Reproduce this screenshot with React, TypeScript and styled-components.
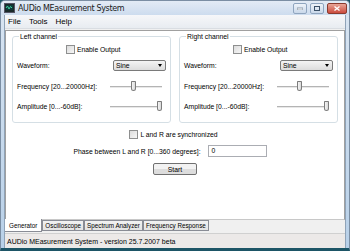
import * as React from "react";
import styled, { createGlobalStyle } from "styled-components";

const font = `"Liberation Sans", "DejaVu Sans", sans-serif`;

const Global = createGlobalStyle`
  html, body { margin: 0; padding: 0; background: #1d5566; }
  body { font-family: ${font}; font-size: 6.8px; color: #000; }
`;

const Frame = styled.div`
  width: 350px;
  height: 251px;
  box-sizing: border-box;
  display: flex;
  flex-direction: column;
  background: linear-gradient(#d9e5f2, #b8d0e8);
  border: 1px solid #7b8ea3;
  border-bottom: 3px solid #1d5566;
  border-radius: 5px 5px 0 0;
  overflow: hidden;
`;

const TitleBar = styled.div`
  height: 14px;
  display: flex;
  align-items: center;
  padding: 0 2px 0 3px;
  gap: 3px;
  background: linear-gradient(#e3ebf5, #cddcee);
`;

const Title = styled.span`
  flex: 1;
  font-size: 8px;
  color: #1a1a1a;
  font-family: "DejaVu Sans", sans-serif;
  letter-spacing: -0.35px;
`;

const WinButton = styled.div<{ close?: boolean; w: number }>`
  width: ${(p) => p.w}px;
  height: 9px;
  border: 1px solid ${(p) => (p.close ? "#8a3a2e" : "#8fa5bf")};
  border-radius: 2px;
  background: ${(p) =>
    p.close
      ? "linear-gradient(#e9a597, #cb4b3e)"
      : "linear-gradient(#eef3f9, #c9d8ea)"};
  display: flex;
  align-items: center;
  justify-content: center;
`;

const Client = styled.div`
  flex: 1;
  margin: 0 3px;
  display: flex;
  flex-direction: column;
  background: #f0f0f0;
  border-left: 1px solid #8fa3b8;
  border-right: 1px solid #8fa3b8;
`;

const MenuBar = styled.div`
  height: 13px;
  display: flex;
  align-items: center;
  gap: 8px;
  padding-left: 3px;
  font-size: 8px;
  background: linear-gradient(#f6f7f9, #e8ecf1);
  border-bottom: 1px solid #d9dde2;
`;

const Page = styled.div`
  flex: 1;
  margin-top: 1px;
  background: #fff;
  border: 1px solid #a0a0a0;
  border-bottom-color: #c8c8c8;
  display: flex;
  flex-direction: column;
  padding: 2px 6px 0 6px;
`;

const Channels = styled.div`
  display: flex;
  justify-content: space-between;
`;

const Group = styled.fieldset`
  flex: 0 0 159px;
  min-width: 0;
  margin: 0;
  padding: 0 4px 0 4px;
  border: 1px solid #d5dfe5;
  border-radius: 3px;
  display: flex;
  flex-direction: column;
  height: 90px;
  box-sizing: border-box;
`;

const Legend = styled.legend`
  padding: 0 1px;
  margin-left: 2px;
`;

const CheckRow = styled.label<{ indent?: number }>`
  display: flex;
  align-items: center;
  gap: 2px;
  height: 10px;
  margin-top: 4px;
  margin-left: ${(p) => p.indent ?? 0}px;
`;

const Box = styled.span`
  width: 7px;
  height: 7px;
  border: 1px solid #8e8f8f;
  background: linear-gradient(135deg, #dcdcdc, #f6f6f6);
`;

const Row = styled.div<{ h: number }>`
  display: flex;
  align-items: center;
  height: ${(p) => p.h}px;
`;

const Label = styled.span`
  width: 96px;
  flex: none;
`;

const Select = styled.div`
  width: 53px;
  height: 11px;
  box-sizing: border-box;
  border: 1px solid #7a7a7a;
  border-radius: 2px;
  background: linear-gradient(#f4f4f4, #dcdcdc);
  display: flex;
  align-items: center;
  justify-content: space-between;
  padding: 0 3px 0 2px;
`;

const Arrow = styled.span`
  width: 0;
  height: 0;
  border-left: 2.5px solid transparent;
  border-right: 2.5px solid transparent;
  border-top: 3px solid #000;
`;

const Track = styled.div`
  position: relative;
  margin-left: -3px;
  width: 52px;
  height: 1px;
  background: #b4b4b4;
  border-bottom: 1px solid #e8e8e8;
`;

const Thumb = styled.span`
  position: absolute;
  top: -5px;
  width: 5px;
  height: 10px;
  box-sizing: border-box;
  border: 1px solid #7c7c7c;
  border-radius: 1px 1px 3px 3px;
  background: linear-gradient(90deg, #f4f4f4, #dadada);
`;

const Center = styled.div`
  display: flex;
  flex-direction: column;
  align-items: center;
  gap: 6px;
  margin-top: 2px;
`;

const PhaseRow = styled.div`
  display: flex;
  align-items: center;
  gap: 7px;
  margin-right: 10px;
`;

const Input = styled.div`
  width: 59px;
  height: 12px;
  box-sizing: border-box;
  border: 1px solid #abadb3;
  padding: 1px 3px;
  background: #fff;
`;

const Button = styled.div`
  width: 44px;
  height: 12px;
  box-sizing: border-box;
  border: 1px solid #707070;
  border-radius: 2px;
  background: linear-gradient(#f2f2f2 50%, #dddddd 50%);
  display: flex;
  align-items: center;
  justify-content: center;
`;

const Tabs = styled.div`
  display: flex;
  height: 13px;
  background: #f0f0f0;
`;

const Tab = styled.div<{ active?: boolean }>`
  padding: 0 ${(p) => (p.active ? 4 : 2)}px;
  height: ${(p) => (p.active ? 13 : 11)}px;
  margin-top: ${(p) => (p.active ? -1 : 0)}px;
  box-sizing: border-box;
  display: flex;
  align-items: center;
  background: ${(p) => (p.active ? "#fff" : "linear-gradient(#f2f2f2, #e3e3e3)")};
  border: 1px solid #898c95;
  border-top: ${(p) => (p.active ? "none" : "1px solid #898c95")};
  border-left: ${(p) => (p.active ? "none" : "1px solid #898c95")};
  font-size: 6.3px;
`;

const Status = styled.div`
  height: 14px;
  display: flex;
  align-items: center;
  padding-left: 2px;
  font-size: 7px;
  background: #ece9e8;
  border-top: 1px solid #d0d0d0;
`;

const Channel: React.FC<{ name: string; freq: number }> = ({ name, freq }) => (
  <Group>
    <Legend>{name}</Legend>
    <CheckRow indent={49}>
      <Box />
      Enable Output
    </CheckRow>
    <Row h={23}>
      <Label>Waveform:</Label>
      <Select>
        Sine
        <Arrow />
      </Select>
    </Row>
    <Row h={19}>
      <Label>Frequency [20...20000Hz]:</Label>
      <Track>
        <Thumb style={{ left: freq }} />
      </Track>
    </Row>
    <Row h={21}>
      <Label>Amplitude [0...-60dB]:</Label>
      <Track>
        <Thumb style={{ left: 47 }} />
      </Track>
    </Row>
  </Group>
);

export default function App() {
  return (
    <>
      <Global />
      <Frame>
        <TitleBar>
          <svg width="11" height="10" viewBox="0 0 11 10">
            <rect x="0.5" y="0.5" width="10" height="9" fill="#1a2a2a" stroke="#556" />
            <rect x="2" y="2" width="7" height="5" fill="#0e3b3b" />
            <path d="M2 5 L3.5 3 L5 6 L6.5 3.5 L8 5" stroke="#3fd0a0" fill="none" />
          </svg>
          <Title>AUDio MEasurement System</Title>
          <WinButton w={12}>
            <svg width="6" height="3"><rect y="1" width="6" height="2" fill="#fff" stroke="#3b5068" strokeWidth="0.5" /></svg>
          </WinButton>
          <WinButton w={12}>
            <svg width="6" height="5"><rect x="0.5" y="0.5" width="5" height="4" fill="none" stroke="#3b5068" /></svg>
          </WinButton>
          <WinButton w={18} close>
            <svg width="6" height="5"><path d="M0.5 0.5 L5.5 4.5 M5.5 0.5 L0.5 4.5" stroke="#fff" strokeWidth="1.3" /></svg>
          </WinButton>
        </TitleBar>
        <Client>
          <MenuBar>
            <span>File</span>
            <span>Tools</span>
            <span>Help</span>
          </MenuBar>
          <Page>
            <Channels>
              <Channel name="Left channel" freq={21} />
              <Channel name="Right channel" freq={20} />
            </Channels>
            <Center>
              <CheckRow indent={-3}>
                <Box />
                L and R are synchronized
              </CheckRow>
              <PhaseRow>
                Phase between L and R [0...360 degrees]:
                <Input>0</Input>
              </PhaseRow>
              <Button>Start</Button>
            </Center>
          </Page>
          <Tabs>
            <Tab active>Generator</Tab>
            <Tab>Oscilloscope</Tab>
            <Tab>Spectrum Analyzer</Tab>
            <Tab>Frequency Response</Tab>
          </Tabs>
          <Status>AUDio MEasurement System - version 25.7.2007 beta</Status>
        </Client>
      </Frame>
    </>
  );
}
